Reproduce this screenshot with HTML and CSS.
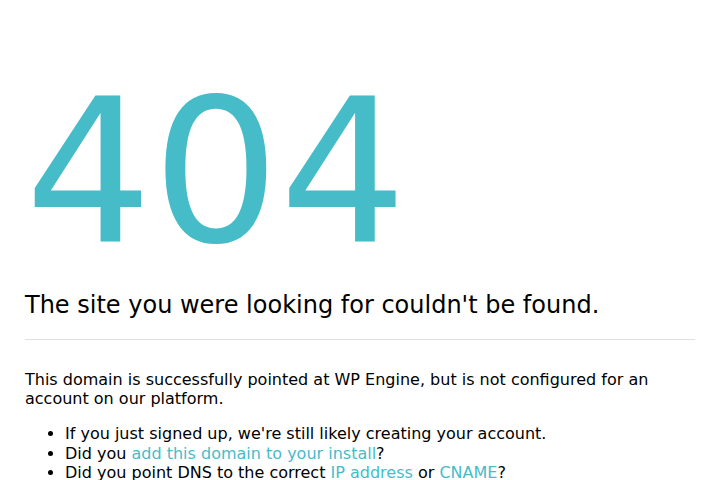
FILE: index.html
```html
<!DOCTYPE html>
<html>
<head>
<meta charset="utf-8">
<link rel="stylesheet" href="styles.css">
</head>
<body>
<div class="page">
  <h1 class="code">404</h1>
  <h2 class="title">The site you were looking for couldn't be found.</h2>
  <hr class="rule">
  <p class="lead">This domain is successfully pointed at WP Engine, but is not configured for an account on our platform.</p>
  <ul class="tips">
    <li>If you just signed up, we're still likely creating your account.</li>
    <li>Did you <a href="#">add this domain to your install</a>?</li>
    <li>Did you point DNS to the correct <a href="#">IP address</a> or <a href="#">CNAME</a>?</li>
  </ul>
</div>
</body>
</html>
```
FILE: styles.css
```css
html, body {
  margin: 0;
  padding: 0;
  background: #fff;
}
body {
  font-family: "DejaVu Sans", sans-serif;
  color: #000;
}
.page {
  padding: 0 25px;
}
.code {
  margin: 0;
  padding-top: 53px;
  font-size: 200px;
  font-weight: normal;
  line-height: 238px;
  color: #46bcc9;
}
.title {
  margin: 0;
  font-size: 24px;
  font-weight: normal;
}
.rule {
  border: 0;
  border-top: 1px solid #e0e0e0;
  margin: 20px 0 31px;
}
.lead {
  font-size: 16px;
  line-height: 18.5px;
  margin: 0;
}
.tips {
  font-size: 16px;
  line-height: 19.5px;
  margin: 16px 0;
  padding-left: 40px;
}
.tips a {
  color: #46bcc9;
  text-decoration: none;
}
```
